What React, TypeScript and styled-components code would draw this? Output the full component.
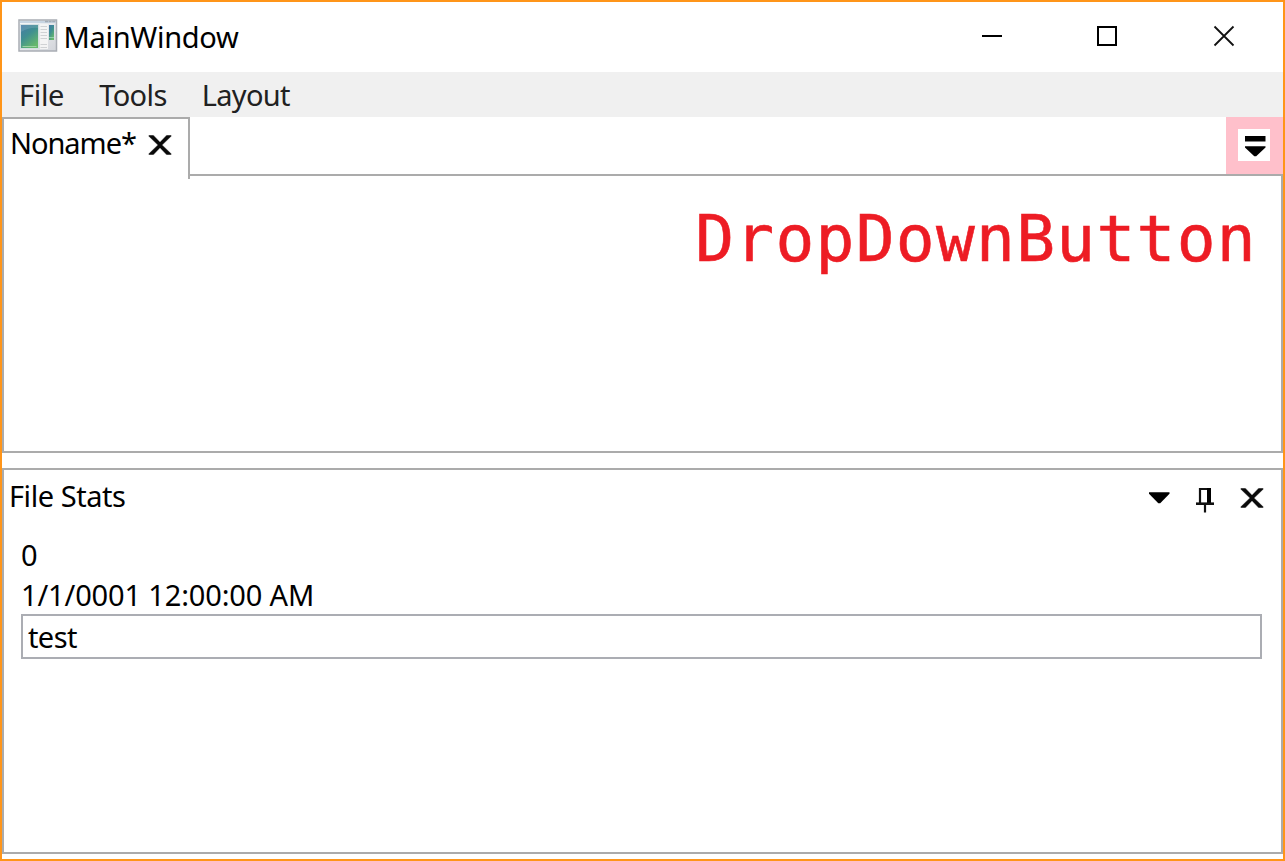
import React from 'react';
import styled, { createGlobalStyle } from 'styled-components';

const GlobalStyle = createGlobalStyle`
  * { box-sizing: border-box; }
  body { margin: 0; background: #fff; }
`;

const Window = styled.div`
  display: flex;
  flex-direction: column;
  width: 1285px;
  height: 861px;
  border: 2px solid #ff9519;
  background: #fff;
  color: #000;
  font-family: "Noto Sans", "Open Sans", sans-serif;
  font-size: 29px;
`;

const Text = styled.span<{ $spacing?: number }>`
  display: block;
  line-height: 40px;
  white-space: pre;
  letter-spacing: ${(p) => p.$spacing ?? 0}px;
`;

const TitleBar = styled.header`
  display: flex;
  flex: 0 0 70px;
  padding-left: 16px;
`;

const AppIcon = styled.svg`
  flex: none;
  margin: 16px 5.5px 0 0;
`;

const TitleText = styled(Text)`
  margin-top: 15px;
`;

const WindowButtons = styled.div`
  display: flex;
  margin-left: auto;
  padding-right: 1px;
  svg { display: block; }
`;

const WindowButton = styled.button`
  display: grid;
  place-items: center;
  width: 116px;
  height: 68px;
  padding: 0;
  border: 0;
  background: none;
`;

const MenuBar = styled.nav`
  display: flex;
  flex: 0 0 45px;
  gap: 35px;
  padding: 3px 0 0 17px;
  background: #f0f0f0;
  color: #212121;
`;

const TabStrip = styled.div`
  display: flex;
  flex: 0 0 57px;
  justify-content: space-between;
  align-items: flex-start;
`;

const Tab = styled.div`
  position: relative;
  z-index: 1;
  display: flex;
  justify-content: space-between;
  width: 188px;
  height: 62px;
  margin-bottom: -5px;
  padding: 4px 15px 0 6px;
  border: 2px solid #ababab;
  border-bottom: 0;
  background: #fff;
  svg { margin-top: 9px; flex: none; }
`;

const DropDownHost = styled.div`
  display: grid;
  width: 57px;
  height: 57px;
  padding: 12px;
  background: #ffc0cb;
`;

const DropDown = styled.button`
  display: block;
  width: 32px;
  height: 32px;
  padding: 0;
  border: 0;
  background: #fff;
  svg { display: block; }
`;

const Document = styled.main`
  flex: 0 0 279px;
  padding: 23px 24px 0 0;
  border: 2px solid #ababab;
`;

const Caption = styled.div`
  color: #ed1c24;
  font-family: "DejaVu Sans Mono", monospace;
  font-size: 64.5px;
  line-height: 80px;
  letter-spacing: 1.3px;
  text-align: right;
  -webkit-text-stroke: 0.6px #ed1c24;
`;

const ToolPane = styled.section`
  flex: 0 0 386px;
  margin-top: 15px;
  border: 2px solid #ababab;
`;

const PaneHeader = styled.div`
  display: flex;
  justify-content: space-between;
  height: 58px;
  padding: 6px 16px 0 5px;
`;

const PaneActions = styled.div`
  display: flex;
  padding-top: 9px;
  svg { display: block; }
`;

const PaneAction = styled.button<{ $gap?: number }>`
  display: flex;
  align-items: flex-start;
  height: 29px;
  margin: 0 0 0 ${(p) => p.$gap ?? 0}px;
  padding: 0;
  border: 0;
  background: none;
`;

const Stats = styled.div`
  padding: 7px 19px 0 17px;
`;

const Field = styled.div`
  height: 45px;
  margin-top: -1px;
  padding: 1px 0 0 5px;
  border: 2px solid #abadb3;
`;

const Cross = () => (
  <svg width="26" height="26" viewBox="0 0 26 26">
    <path d="M1.500 3H6.500L13 9.800L19.500 3H24.500V4.300L15.500 13L24.500 21.700V23H19.500L13 16.200L6.500 23H1.500V21.700L10.500 13L1.500 4.300Z" fill="#0a0a0a" stroke="#fff" strokeWidth=".5" />
  </svg>
);

const Logo = () => (
  <AppIcon width="40" height="36" viewBox="0 0 40 36">
    <defs>
      <linearGradient id="screen" x1="0" y1="0" x2=".6" y2="1">
        <stop offset="0" stopColor="#4479a8" />
        <stop offset=".5" stopColor="#408f91" />
        <stop offset="1" stopColor="#66b86c" />
      </linearGradient>
      <linearGradient id="frame" x2="1" y2="1">
        <stop offset="0" stopColor="#f8f9fb" />
        <stop offset="1" stopColor="#d2d5da" />
      </linearGradient>
    </defs>
    <rect x="1" y="2" width="37.500" height="31" fill="url(#frame)" stroke="#a9adb4" strokeWidth="1.500" />
    <path d="M2 4H38" stroke="#c8d5e2" strokeWidth="2" />
    <path d="M27 3.500H38" stroke="#a3abb5" strokeWidth="1.500" strokeDasharray="3 .6" />
    <rect x="2.500" y="6.500" width="18" height="24" fill="url(#screen)" stroke="#d4dfe2" />
    <path d="M3 14Q12 9 20 10V7H3Z" fill="#fff" opacity=".13" />
    <path d="M4.500 28.500H18.500" stroke="#9bd3a2" />
    <rect x="22" y="6" width="8" height="25" fill="#f4f4f4" />
    <path d="M22.500 8.500H29M22.500 11.500H29M22.500 14.500H29M22.500 17.500H29M22.500 20.500H29M22.500 26.500H29M22.500 29.500H29" stroke="#d0d2d4" />
    <rect x="31" y="7" width="5" height="15" fill="url(#screen)" />
    <path d="M31 19.500H36" stroke="#91cfab" />
  </AppIcon>
);

export default function App() {
  return (
    <Window>
      <GlobalStyle />
      <TitleBar>
        <Logo />
        <TitleText $spacing={-0.3}>MainWindow</TitleText>
        <WindowButtons>
          <WindowButton>
            <svg width="22" height="22"><path d="M1 11H21" stroke="#000" strokeWidth="2" /></svg>
          </WindowButton>
          <WindowButton>
            <svg width="22" height="22"><path d="M1 2H19V20H1Z" fill="none" stroke="#000" strokeWidth="2" /></svg>
          </WindowButton>
          <WindowButton>
            <svg width="22" height="22"><path d="M1.500 1.500L20.500 20.500M20.500 1.500L1.500 20.500" stroke="#111" strokeWidth="1.800" /></svg>
          </WindowButton>
        </WindowButtons>
      </TitleBar>
      <MenuBar>
        <Text $spacing={-0.3}>File</Text>
        <Text $spacing={-0.6}>Tools</Text>
        <Text $spacing={-0.7}>Layout</Text>
      </MenuBar>
      <TabStrip>
        <Tab>
          <Text $spacing={-1.05}>Noname*</Text>
          <Cross />
        </Tab>
        <DropDownHost>
          <DropDown>
            <svg width="32" height="32" viewBox="0 0 32 32">
              <path d="M7 7H27.500V12.500H7Z" fill="#000" />
              <path d="M7 17.300H27.500V18.500L18.200 27.300H16.300L7 18.500Z" fill="#000" />
            </svg>
          </DropDown>
        </DropDownHost>
      </TabStrip>
      <Document>
        <Caption>DropDownButton</Caption>
      </Document>
      <ToolPane>
        <PaneHeader>
          <Text $spacing={-0.45}>File Stats</Text>
          <PaneActions>
            <PaneAction>
              <svg width="22" height="26" viewBox="0 0 22 26"><path d="M1 7.300H21.500V8.800L12.200 18.200H10.300L1 8.800Z" /></svg>
            </PaneAction>
            <PaneAction $gap={25}>
              <svg width="20" height="29" viewBox="0 0 20 29">
                <path d="M5 3V19M4 4H16M10 18V27.500" fill="none" stroke="#111" strokeWidth="2.200" />
                <path d="M14 3V19" stroke="#000" strokeWidth="4" />
                <path d="M1 18.700H19" stroke="#111" strokeWidth="2.600" />
              </svg>
            </PaneAction>
            <PaneAction $gap={24}><Cross /></PaneAction>
          </PaneActions>
        </PaneHeader>
        <Stats>
          <Text>0</Text>
          <Text $spacing={-0.15}>1/1/0001 12:00:00 AM</Text>
          <Field><Text $spacing={-0.6}>test</Text></Field>
        </Stats>
      </ToolPane>
    </Window>
  );
}
